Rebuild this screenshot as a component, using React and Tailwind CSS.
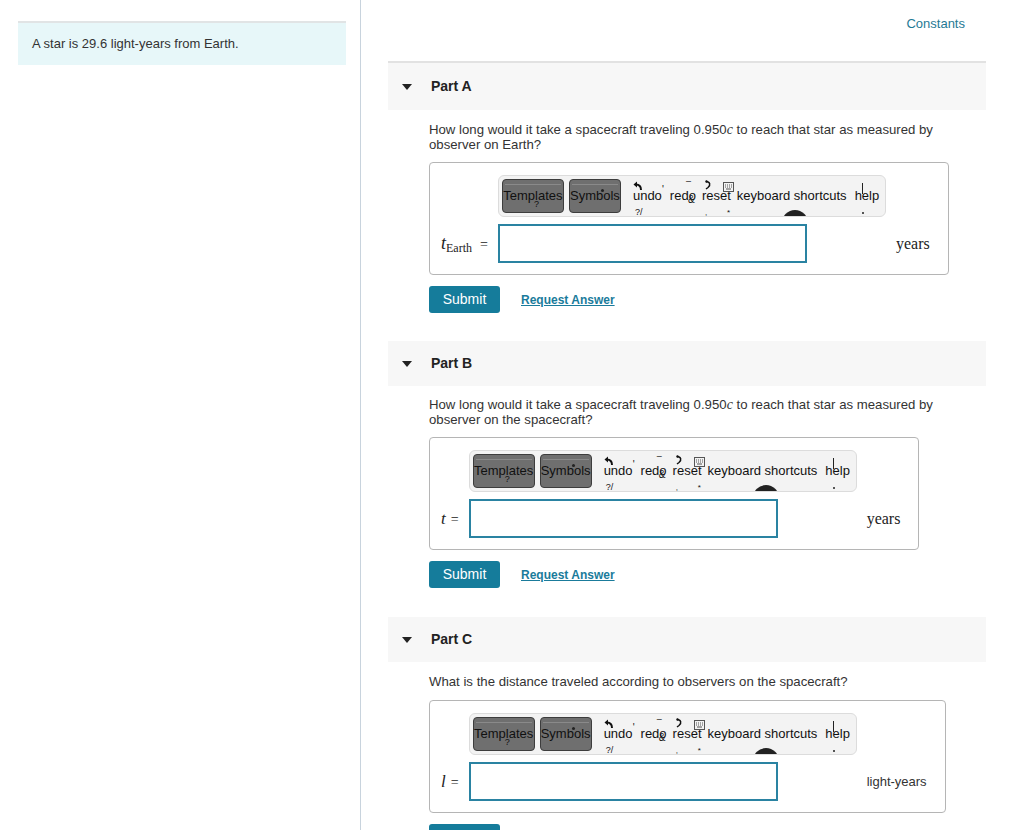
import React from "react";

const sans = { fontFamily: '"Liberation Sans", Arial, sans-serif' };
const serif = { fontFamily: '"Liberation Serif", "DejaVu Serif", serif' };

function Toolbar() {
  return (
    <div className="relative w-[388px] h-[42px] rounded-[6px] border border-[#dcdcdc] bg-[#f3f3f3] overflow-hidden text-[13px] text-[#111]">
      <div className="flex items-center h-full pl-[3px]">
        <div className="relative w-[62px] h-[34px] rounded-[4px] border border-[#3d3d3d] bg-[#6f6f6f] flex items-center justify-center">
          <div className="absolute left-[2px] right-[2px] top-[4px] h-px bg-[#8a8a8a]"></div>
          <span className="relative">Templates</span>
          <span className="absolute left-[31px] top-[20px] text-[9px] leading-none">?</span>
        </div>
        <div className="relative ml-[5px] w-[52px] h-[34px] rounded-[4px] border border-[#3d3d3d] bg-[#6f6f6f] flex items-center justify-center">
          <div className="absolute left-[2px] right-[2px] top-[4px] h-px bg-[#8a8a8a]"></div>
          <span className="relative">Symbols</span>
          <span className="absolute left-[31px] top-[9px] w-[3px] h-[3px] rounded-full bg-[#222]"></span>
        </div>
        <span className="ml-[12px]">undo</span>
        <span className="ml-[8px]">redo</span>
        <span className="ml-[6px]">reset</span>
        <span className="ml-[6px]">keyboard shortcuts</span>
        <span className="ml-[8px]">help</span>
      </div>
      {/* overlay artifacts */}
      <svg className="absolute left-[134px] top-[5px]" width="10" height="10" viewBox="0 0 10 10">
        <path d="M8 9 C8 5 6 3.5 3 3.5" stroke="#111" strokeWidth="2" fill="none" />
        <path d="M0.5 3.5 L4 0.5 L4 6.5 Z" fill="#111" />
      </svg>
      <span className="absolute left-[163px] top-[9px] text-[10px] leading-none">'</span>
      <span className="absolute left-[187px] top-[1px] text-[9px] leading-none">–</span>
      <span className="absolute left-[189px] top-[19px] text-[10px] leading-none">&amp;</span>
      <svg className="absolute left-[205px] top-[4px]" width="9" height="14" viewBox="0 0 9 14">
        <path d="M2 1.5 C6 1.5 7 5 4 7.5 L2 9" stroke="#111" strokeWidth="1.5" fill="none" />
        <circle cx="2.5" cy="1.5" r="1.2" fill="#111" />
      </svg>
      <svg className="absolute left-[224px] top-[6px]" width="11" height="10" viewBox="0 0 11 10">
        <rect x="0.5" y="0.5" width="10" height="9" fill="none" stroke="#555" strokeWidth="1" />
        <path d="M2 3h1M4 3h1M6 3h1M8 3h1M2 5h1M4 5h1M6 5h1M8 5h1M3 7h5" stroke="#555" strokeWidth="1" />
      </svg>
      <span className="absolute left-[136px] top-[32px] text-[9px] leading-none">?/</span>
      <span className="absolute left-[206px] top-[33px] text-[8px] leading-none">,</span>
      <span className="absolute left-[228px] top-[33px] text-[8px] leading-none">*</span>
      <div className="absolute left-[283px] top-[34px] w-[26px] h-[26px] rounded-full bg-[#222]"></div>
      <div className="absolute left-[363px] top-[7px] w-px h-[11px] bg-[#222]"></div>
      <div className="absolute left-[363px] top-[36px] w-[2px] h-[2px] bg-[#555]"></div>
    </div>
  );
}

function AnswerBox({ label, unit, unitSerif }) {
  return (
    <div className="inline-flex rounded-[4px] border border-[#b5b5b5] pl-[11px] pr-[18px] pt-[12px] pb-[11px]">
      <div className="flex flex-col mr-[10px]">
        <div className="h-[42px]"></div>
        <div className="h-[39px] mt-[7px] flex items-center">{label}</div>
      </div>
      <div className="flex flex-col">
        <Toolbar />
        <div className="mt-[7px] flex items-center">
          <div className="w-[309px] h-[39px] border-2 border-solid border-[#2a83a2] bg-white"></div>
          <span
            className={unitSerif ? "ml-[89px] text-[16px] text-[#222]" : "ml-[89px] text-[13px] text-[#333]"}
            style={unitSerif ? serif : sans}
          >
            {unit}
          </span>
        </div>
      </div>
    </div>
  );
}

function PartHeader({ title, border }) {
  return (
    <div className={"flex items-center bg-[#f7f7f7] " + (border ? "h-[49px] border-t-2 border-[#e2e2e2]" : "h-[45px]")}>
      <svg className="ml-[13px]" width="12" height="8" viewBox="0 0 12 8">
        <path d="M1 1 L11 1 L6 7 Z" fill="#222" />
      </svg>
      <span className="ml-[18px] text-[14px] font-bold text-[#222]">{title}</span>
    </div>
  );
}

function Buttons() {
  return (
    <div className="flex items-center mt-[11px]">
      <div className="w-[71px] h-[27px] rounded-[3px] bg-[#157c9b] text-white text-[14px] flex items-center justify-center">
        Submit
      </div>
      <span className="ml-[21px] text-[12px] font-bold text-[#1a7b9b] underline">Request Answer</span>
    </div>
  );
}

const qText = "text-[13.2px] leading-[15px] text-[#333]";

export default function App() {
  return (
    <div className="w-[1024px] h-[830px] overflow-hidden flex bg-white" style={sans}>
      <div className="w-[361px] shrink-0 border-r border-[#c8d3dd] pl-[18px] pt-[21px]">
        <div className="w-[328px] h-[44px] border-t-2 border-[#e1e4e5] bg-[#e7f7f9] flex items-center pl-[14px] text-[13px] text-[#333]">
          A star is 29.6 light-years from Earth.
        </div>
      </div>
      <div className="pl-[27px] w-[625px]">
        <div className="w-[598px]">
          <div className="flex justify-end pr-[21px] pt-[14px] h-[61px]">
            <span className="text-[13px] text-[#1f7a95]">Constants</span>
          </div>

          <PartHeader title="Part A" border />
          <div className="pl-[41px] pt-[12px]">
            <p className={qText}>
              How long would it take a spacecraft traveling 0.950<span className="italic text-[14px]" style={serif}>c</span> to reach that star as measured by
              <br />
              observer on Earth?
            </p>
            <div className="mt-[10px]">
              <AnswerBox
                label={
                  <span className="text-[14px] text-[#222] whitespace-nowrap" style={serif}>
                    <i className="text-[18px]">t</i>
                    <span className="text-[12px] relative top-[3px]">Earth</span>
                    <span className="ml-[8px]">=</span>
                  </span>
                }
                unit="years"
                unitSerif
              />
            </div>
            <Buttons />
          </div>

          <div className="mt-[28px]">
            <PartHeader title="Part B" />
          </div>
          <div className="pl-[41px] pt-[11px]">
            <p className={qText}>
              How long would it take a spacecraft traveling 0.950<span className="italic text-[14px]" style={serif}>c</span> to reach that star as measured by
              <br />
              observer on the spacecraft?
            </p>
            <div className="mt-[10px]">
              <AnswerBox
                label={
                  <span className="text-[14px] text-[#222] whitespace-nowrap" style={serif}>
                    <i className="text-[17px]">t</i>
                    <span className="ml-[5px]">=</span>
                  </span>
                }
                unit="years"
                unitSerif
              />
            </div>
            <Buttons />
          </div>

          <div className="mt-[29px]">
            <PartHeader title="Part C" />
          </div>
          <div className="pl-[41px] pt-[12px]">
            <p className={qText}>
              What is the distance traveled according to observers on the spacecraft?
            </p>
            <div className="mt-[11px]">
              <AnswerBox
                label={
                  <span className="text-[14px] text-[#222] whitespace-nowrap" style={serif}>
                    <i className="text-[17px]">l</i>
                    <span className="ml-[5px]">=</span>
                  </span>
                }
                unit="light-years"
              />
            </div>
            <Buttons />
          </div>
        </div>
      </div>
    </div>
  );
}
